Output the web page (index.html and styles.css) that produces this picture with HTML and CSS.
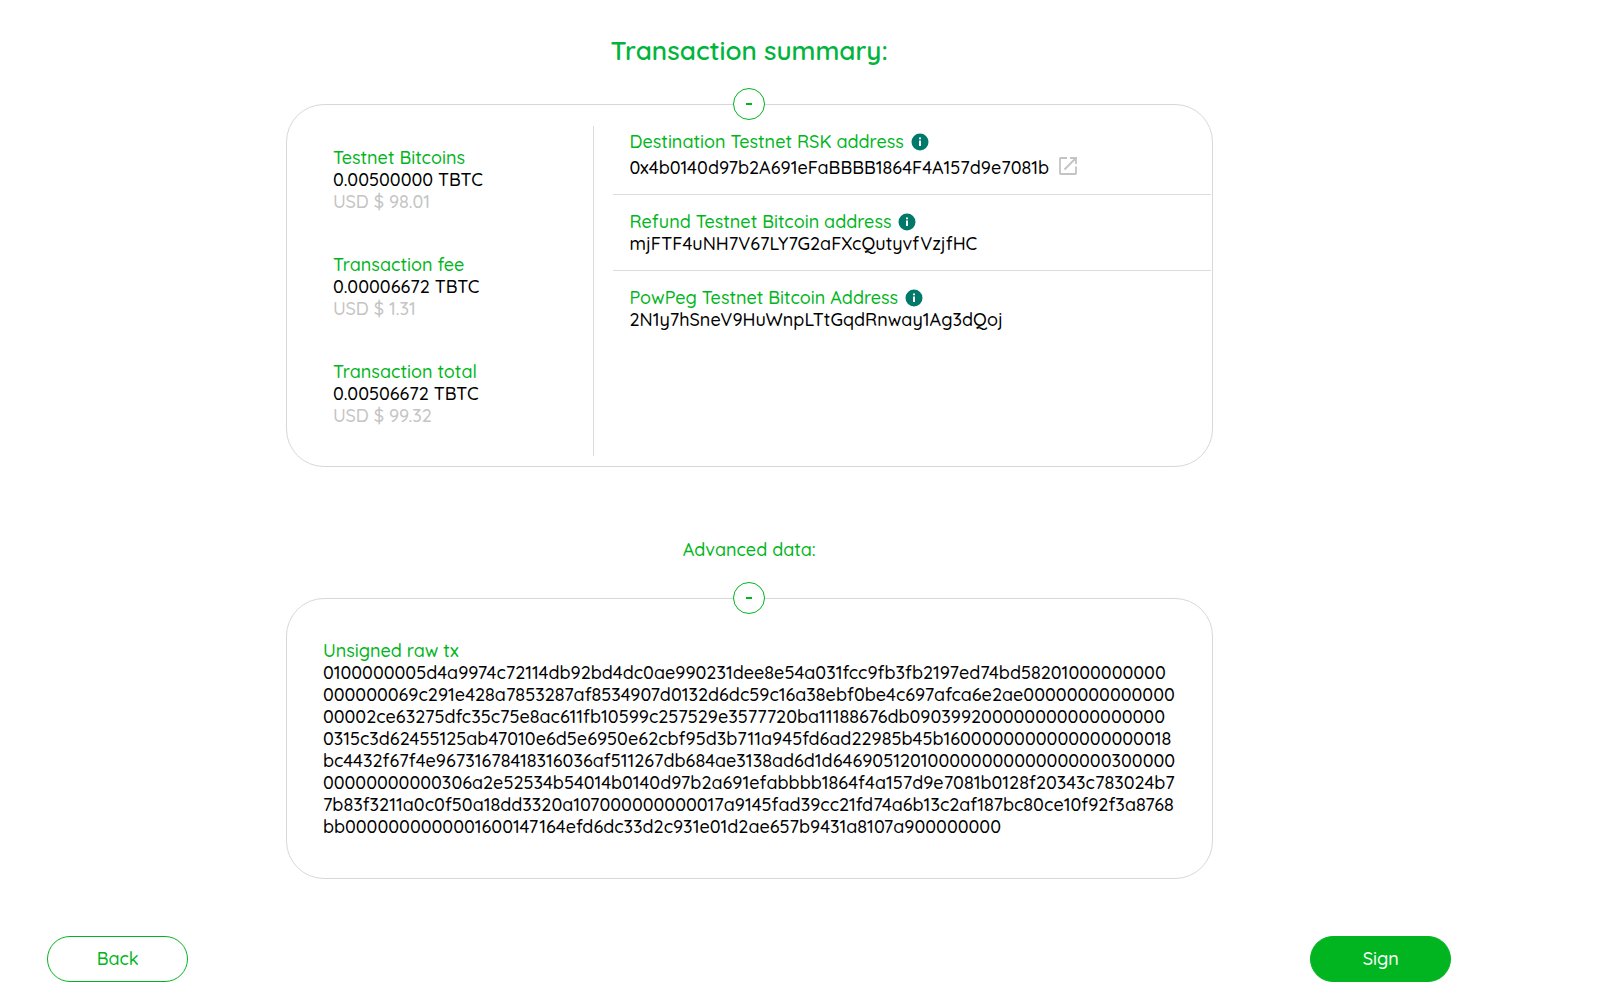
FILE: index.html
```html
<!DOCTYPE html>
<html lang="en">
<head>
<meta charset="utf-8">
<meta name="viewport" content="width=device-width, initial-scale=1">
<title>Transaction summary</title>
<link rel="stylesheet" href="styles.css">
</head>
<body>
<svg class="sprite" aria-hidden="true">
  <symbol id="info" viewBox="0 0 18 18">
    <circle cx="9" cy="9" r="8.5" fill="#00796b"/>
    <path d="M8 4.5h2v1.8H8zM8 7.5h2v5.5H8z" fill="#fff"/>
  </symbol>
  <symbol id="open" viewBox="0 0 18 18">
    <path d="M8 1H1.5Q1 1 1 1.5V16.5Q1 17 1.5 17H16.5Q17 17 17 16.5V9.5M11 1H17V7M17 1L5.5 12.5" fill="none" stroke="#c4c4c4" stroke-width="1.8"/>
  </symbol>
</svg>
<main class="page">
  <section class="section">
    <h1 class="title">Transaction summary:</h1>
    <button class="toggle" type="button" aria-label="Collapse summary"><span class="dash"></span></button>
    <div class="card summary">
      <dl class="amounts">
        <div class="amount"><dt class="label">Testnet Bitcoins</dt><dd>0.00500000 TBTC</dd><dd class="usd">USD $ 98.01</dd></div>
        <div class="amount"><dt class="label">Transaction fee</dt><dd>0.00006672 TBTC</dd><dd class="usd">USD $ 1.31</dd></div>
        <div class="amount"><dt class="label">Transaction total</dt><dd>0.00506672 TBTC</dd><dd class="usd">USD $ 99.32</dd></div>
      </dl>
      <dl class="addresses">
        <div class="address">
          <dt class="label">Destination Testnet RSK address <svg class="icon"><use href="#info"/></svg></dt>
          <dd class="linked">0x4b0140d97b2A691eFaBBBB1864F4A157d9e7081b <a class="link" href="#" aria-label="Open in explorer"><svg class="icon"><use href="#open"/></svg></a></dd>
        </div>
        <div class="address">
          <dt class="label">Refund Testnet Bitcoin address <svg class="icon"><use href="#info"/></svg></dt>
          <dd>mjFTF4uNH7V67LY7G2aFXcQutyvfVzjfHC</dd>
        </div>
        <div class="address">
          <dt class="label">PowPeg Testnet Bitcoin Address <svg class="icon"><use href="#info"/></svg></dt>
          <dd>2N1y7hSneV9HuWnpLTtGqdRnway1Ag3dQoj</dd>
        </div>
      </dl>
    </div>
  </section>
  <section class="section advanced">
    <h2 class="subtitle">Advanced data:</h2>
    <button class="toggle" type="button" aria-label="Collapse advanced data"><span class="dash"></span></button>
    <div class="card raw">
      <h3 class="label">Unsigned raw tx</h3>
      <p class="hex">0100000005d4a9974c72114db92bd4dc0ae990231dee8e54a031fcc9fb3fb2197ed74bd58201000000000<br>000000069c291e428a7853287af8534907d0132d6dc59c16a38ebf0be4c697afca6e2ae00000000000000<br>00002ce63275dfc35c75e8ac611fb10599c257529e3577720ba11188676db090399200000000000000000<br>0315c3d62455125ab47010e6d5e6950e62cbf95d3b711a945fd6ad22985b45b1600000000000000000018<br>bc4432f67f4e96731678418316036af511267db684ae3138ad6d1d646905120100000000000000000300000<br>00000000000306a2e52534b54014b0140d97b2a691efabbbb1864f4a157d9e7081b0128f20343c783024b7<br>7b83f3211a0c0f50a18dd3320a107000000000017a9145fad39cc21fd74a6b13c2af187bc80ce10f92f3a8768<br>bb0000000000001600147164efd6dc33d2c931e01d2ae657b9431a8107a900000000</p>
    </div>
  </section>
  <nav class="actions">
    <button class="button" type="button">Back</button>
    <button class="button primary" type="button">Sign</button>
  </nav>
</main>
</body>
</html>
```
FILE: styles.css
```css
* { box-sizing: border-box; }
body {
  margin: 0;
  background: #fff;
  color: #000;
  font-family: Quicksand, Lato, sans-serif;
  font-size: 18px;
  font-weight: 500;
  line-height: 22px;
}
h1, h2, h3, p, dl, dd { margin: 0; font-weight: 500; font-size: 18px; }
.sprite { position: absolute; width: 0; height: 0; }
.page {
  display: flex;
  flex-direction: column;
  padding: 35px 9.3% 12px 2.95%;
}
.section {
  display: flex;
  flex-direction: column;
  align-items: center;
}
.advanced { margin-top: 72px; }
.title {
  margin-bottom: 21px;
  color: #00b43c;
  font-size: 26px;
  font-weight: 600;
  line-height: 32px;
}
.subtitle { margin-bottom: 21px; color: #00b520; }
.toggle {
  z-index: 1;
  display: grid;
  place-items: center;
  width: 32px;
  height: 32px;
  margin-bottom: -16px;
  padding: 0;
  border: 1px solid #00b520;
  border-radius: 50%;
  background: #fff;
}
.dash { width: 6px; height: 2px; background: #00b520; }
.card {
  width: 66%;
  border: 1px solid #d8d8d8;
  border-radius: 38px;
}
.summary { display: flex; padding: 21px 1px 10px 0; }
.amounts {
  display: flex;
  flex-direction: column;
  flex: 0 0 33.3%;
  gap: 41px;
  padding: 21px 8px 29px 46px;
  border-right: 1px solid #dcdcdc;
}
.label { color: #00b520; }
.usd { color: #c4c4c4; }
.addresses { flex: 1; min-width: 0; padding-left: 19px; }
.address { padding: 16px 0 15px 16px; }
.address:first-child { padding-top: 5px; }
.address + .address { border-top: 1px solid #dcdcdc; }
.address .label, .linked { display: flex; align-items: center; gap: 7px; }
.linked { gap: 10px; padding-top: 4px; }
.icon { display: block; width: 18px; height: 18px; }
.link { display: block; padding-bottom: 4px; }
.raw { padding: 41px 36px 40px; }
.hex { white-space: nowrap; }
.actions {
  display: flex;
  justify-content: space-between;
  margin-top: 57px;
}
.button {
  width: 141px;
  height: 46px;
  border: 1px solid #00b520;
  border-radius: 23px;
  background: #fff;
  color: #00b520;
  font: inherit;
}
.primary { background: #00b520; color: #fff; }
```
